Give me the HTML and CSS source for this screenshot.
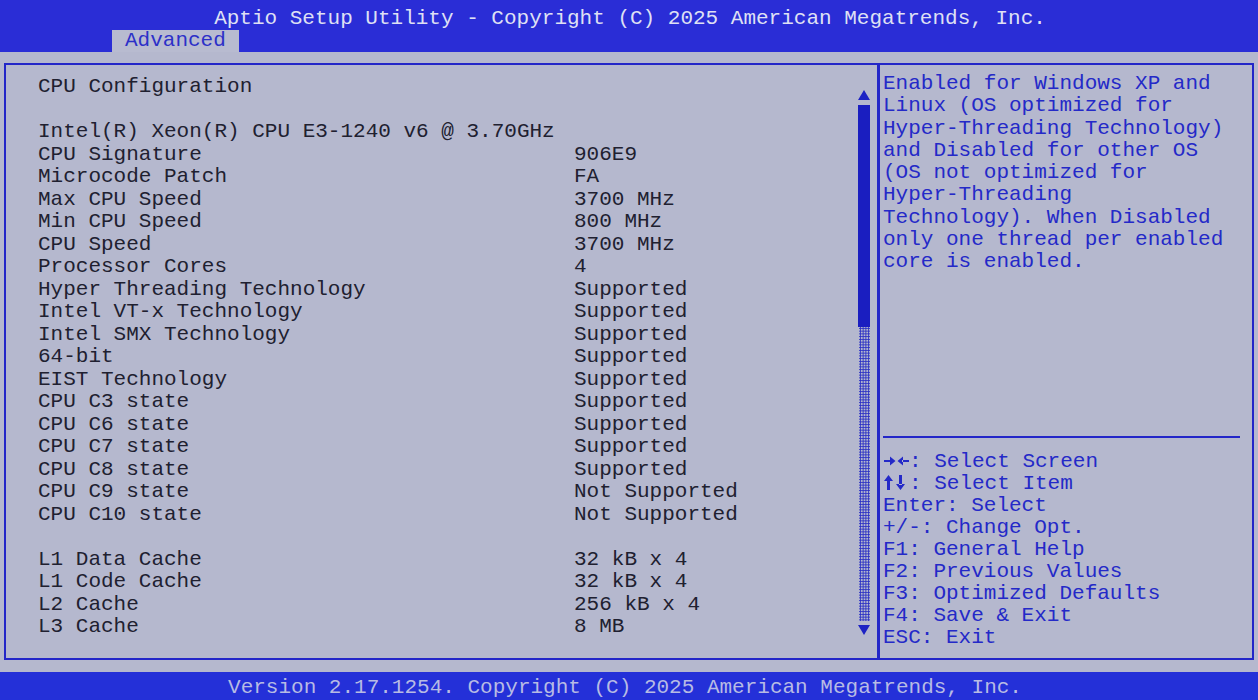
FILE: index.html
```html
<!DOCTYPE html>
<html>
<head>
    <meta charset="utf-8">
    <title>Aptio Setup Utility</title>
    <link rel="stylesheet" href="styles.css">
</head>
<body>
    <div class="screen">
        <div class="header">
            <div class="title">Aptio Setup Utility - Copyright (C) 2025 American Megatrends, Inc.</div>
            <div class="tabs">
                <div class="tab active">Advanced</div>
            </div>
        </div>

        <div class="main">
            <div class="frame">
                <div class="left-panel">
                    <div class="items">
                        <div class="row"><span class="label">CPU Configuration</span></div>
                        <div class="row blank"></div>
                        <div class="row"><span class="label">Intel(R) Xeon(R) CPU E3-1240 v6 @ 3.70GHz</span></div>
                        <div class="row"><span class="label">CPU Signature</span><span class="value">906E9</span></div>
                        <div class="row"><span class="label">Microcode Patch</span><span class="value">FA</span></div>
                        <div class="row"><span class="label">Max CPU Speed</span><span class="value">3700 MHz</span></div>
                        <div class="row"><span class="label">Min CPU Speed</span><span class="value">800 MHz</span></div>
                        <div class="row"><span class="label">CPU Speed</span><span class="value">3700 MHz</span></div>
                        <div class="row"><span class="label">Processor Cores</span><span class="value">4</span></div>
                        <div class="row"><span class="label">Hyper Threading Technology</span><span class="value">Supported</span></div>
                        <div class="row"><span class="label">Intel VT-x Technology</span><span class="value">Supported</span></div>
                        <div class="row"><span class="label">Intel SMX Technology</span><span class="value">Supported</span></div>
                        <div class="row"><span class="label">64-bit</span><span class="value">Supported</span></div>
                        <div class="row"><span class="label">EIST Technology</span><span class="value">Supported</span></div>
                        <div class="row"><span class="label">CPU C3 state</span><span class="value">Supported</span></div>
                        <div class="row"><span class="label">CPU C6 state</span><span class="value">Supported</span></div>
                        <div class="row"><span class="label">CPU C7 state</span><span class="value">Supported</span></div>
                        <div class="row"><span class="label">CPU C8 state</span><span class="value">Supported</span></div>
                        <div class="row"><span class="label">CPU C9 state</span><span class="value">Not Supported</span></div>
                        <div class="row"><span class="label">CPU C10 state</span><span class="value">Not Supported</span></div>
                        <div class="row blank"></div>
                        <div class="row"><span class="label">L1 Data Cache</span><span class="value">32 kB x 4</span></div>
                        <div class="row"><span class="label">L1 Code Cache</span><span class="value">32 kB x 4</span></div>
                        <div class="row"><span class="label">L2 Cache</span><span class="value">256 kB x 4</span></div>
                        <div class="row"><span class="label">L3 Cache</span><span class="value">8 MB</span></div>
                    </div>

                    <div class="scrollbar">
                        <div class="arrow up"></div>
                        <div class="thumb"></div>
                        <div class="track"></div>
                        <div class="arrow down"></div>
                    </div>
                </div>

                <div class="right-panel">
                    <div class="description">
                        Enabled for Windows XP and<br>
                        Linux (OS optimized for<br>
                        Hyper-Threading Technology)<br>
                        and Disabled for other OS<br>
                        (OS not optimized for<br>
                        Hyper-Threading<br>
                        Technology). When Disabled<br>
                        only one thread per enabled<br>
                        core is enabled.
                    </div>
                    <div class="keys">
                        <div><svg class="key-icon" width="25" height="14" viewBox="0 0 25 14" aria-label="left right"><path d="M0 6h7v2H0zM6 2.5l5.5 4.5L6 11.5zM18 6h7v2h-7zM19 2.5L13.5 7l5.5 4.5z" fill="currentColor"/></svg>: Select Screen</div>
                        <div><svg class="key-icon" width="25" height="15" viewBox="0 0 25 15" aria-label="up down"><path d="M3 5h3v10H3zM0 6L4.5 0 9 6zM15 0h3v10h-3zM12 9l4.5 6L21 9z" fill="currentColor"/></svg>: Select Item</div>
                        <div>Enter: Select</div>
                        <div>+/-: Change Opt.</div>
                        <div>F1: General Help</div>
                        <div>F2: Previous Values</div>
                        <div>F3: Optimized Defaults</div>
                        <div>F4: Save &amp; Exit</div>
                        <div>ESC: Exit</div>
                    </div>
                </div>
            </div>
        </div>

        <div class="footer">Version 2.17.1254. Copyright (C) 2025 American Megatrends, Inc.</div>
    </div>
</body>
</html>
```

FILE: styles.css
```css
body {
    margin: 0;
    background-color: #14141c;
    font-family: 'Liberation Mono', 'DejaVu Sans Mono', monospace;
    font-size: 21px;
}
.screen {
    width: 1258px;
    height: 700px;
    display: flex;
    flex-direction: column;
    background: #b5b8ce;
    overflow: hidden;
}
.header {
    height: 52px;
    background: #2a2dd6;
    display: flex;
    flex-direction: column;
}
.title {
    height: 30px;
    line-height: 38px;
    text-align: center;
    color: #dfe0f4;
    padding-left: 2px;
}
.tabs {
    display: flex;
    padding-left: 112px;
    margin-top: auto;
}
.tab {
    height: 22px;
    line-height: 22px;
    padding: 0 13px 0 13px;
    color: #2c30c8;
    background: #b8bbd0;
}
.main {
    flex: 1;
    padding: 11px 4px 12px 4px;
    display: flex;
}
.frame {
    flex: 1;
    display: flex;
    border: 2px solid #2326c8;
}
.left-panel {
    width: 871px;
    display: flex;
    padding: 11px 7px 0 32px;
    box-sizing: border-box;
}
.items {
    flex: 1;
    color: #202030;
}
.row {
    display: grid;
    grid-template-columns: 536px 1fr;
    height: 22.5px;
    line-height: 22.5px;
    white-space: nowrap;
}
.scrollbar {
    width: 12px;
    display: flex;
    flex-direction: column;
    align-items: center;
    padding-top: 14px;
    height: 545px;
}
.arrow {
    width: 0;
    height: 0;
    border-left: 6px solid transparent;
    border-right: 6px solid transparent;
}
.arrow.up {
    border-bottom: 10px solid #1d22c4;
    margin-bottom: 5px;
}
.arrow.down {
    border-top: 10px solid #1d22c4;
    margin-top: 4px;
}
.thumb {
    width: 12px;
    height: 222px;
    background: #1a1ec0;
}
.track {
    width: 11px;
    flex: 1;
    background: radial-gradient(circle, #2a2fc4 0.9px, transparent 1.2px) 0 0 / 2.75px 2.75px;
}
.right-panel {
    flex: 1;
    display: flex;
    flex-direction: column;
    border-left: 3px solid #2326c8;
    padding: 8px 12px 0 3px;
    color: #2429c8;
}
.description {
    flex: 1;
    line-height: 22.25px;
    white-space: nowrap;
}
.keys {
    border-top: 2px solid #2326c8;
    padding-top: 13px;
    height: 222px;
    box-sizing: border-box;
    line-height: 22px;
    white-space: nowrap;
}
.key-icon {
    vertical-align: -1px;
    margin-left: 1px;
}
.footer {
    height: 28px;
    line-height: 32px;
    background: #2430d8;
    color: #b7bbe4;
    text-align: center;
    padding-right: 8px;
}
```
